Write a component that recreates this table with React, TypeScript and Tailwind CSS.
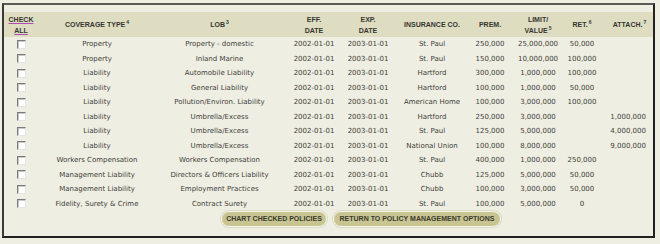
import React from "react";

type Row = {
  cov: string;
  lob: string;
  ins: string;
  prem: string;
  limit: string;
  ret: string;
  attach: string;
};

const rows: Row[] = [
  { cov: "Property", lob: "Property - domestic", ins: "St. Paul", prem: "250,000", limit: "25,000,000", ret: "50,000", attach: "" },
  { cov: "Property", lob: "Inland Marine", ins: "St. Paul", prem: "150,000", limit: "10,000,000", ret: "100,000", attach: "" },
  { cov: "Liability", lob: "Automobile Liability", ins: "Hartford", prem: "300,000", limit: "1,000,000", ret: "100,000", attach: "" },
  { cov: "Liability", lob: "General Liability", ins: "Hartford", prem: "100,000", limit: "1,000,000", ret: "50,000", attach: "" },
  { cov: "Liability", lob: "Pollution/Environ. Liability", ins: "American Home", prem: "100,000", limit: "3,000,000", ret: "100,000", attach: "" },
  { cov: "Liability", lob: "Umbrella/Excess", ins: "Hartford", prem: "250,000", limit: "3,000,000", ret: "", attach: "1,000,000" },
  { cov: "Liability", lob: "Umbrella/Excess", ins: "St. Paul", prem: "125,000", limit: "5,000,000", ret: "", attach: "4,000,000" },
  { cov: "Liability", lob: "Umbrella/Excess", ins: "National Union", prem: "100,000", limit: "8,000,000", ret: "", attach: "9,000,000" },
  { cov: "Workers Compensation", lob: "Workers Compensation", ins: "St. Paul", prem: "400,000", limit: "1,000,000", ret: "250,000", attach: "" },
  { cov: "Management Liability", lob: "Directors & Officers Liability", ins: "Chubb", prem: "125,000", limit: "5,000,000", ret: "50,000", attach: "" },
  { cov: "Management Liability", lob: "Employment Practices", ins: "Chubb", prem: "100,000", limit: "3,000,000", ret: "50,000", attach: "" },
  { cov: "Fidelity, Surety & Crime", lob: "Contract Surety", ins: "St. Paul", prem: "100,000", limit: "5,000,000", ret: "0", attach: "" },
];

const grid =
  "grid grid-cols-[34px_118px_127px_62px_46px_82px_34px_62px_26px_57px]";

function Sup({ n }: { n: string }) {
  return <span className="relative -top-[3px] text-[5px] leading-none ml-[1px]">{n}</span>;
}

function H({ children, className = "" }: { children: React.ReactNode; className?: string }) {
  return (
    <div className={"flex flex-col items-center justify-center whitespace-nowrap " + className}>
      {children}
    </div>
  );
}

function C({ children, className = "" }: { children?: React.ReactNode; className?: string }) {
  return (
    <div className={"flex items-center justify-center whitespace-nowrap " + className}>{children}</div>
  );
}

function Check() {
  return (
    <span className="block w-[9px] h-[9px] bg-white border-t border-l border-t-[#7b7b7b] border-l-[#7b7b7b] border-b border-r border-b-[#e4e4e4] border-r-[#e4e4e4] shadow-[inset_1px_1px_0_#c8c8c8]" />
  );
}

export default function App() {
  return (
    <div className="w-[660px] h-[244px] bg-[#efeee2] pt-[3px] pl-[2px]">
      <div
        className="w-[653px] h-[235px] border-2 border-t-[#5a5a54] border-l-[#3a3a36] border-r-[#222220] border-b-[#222220] bg-[#efeee2] pt-[7px] text-[#3e3e3a]"
        style={{ fontFamily: '"DejaVu Sans", Verdana, sans-serif' }}
      >
        <div
          className={grid + " h-[25px] bg-[#dedcc1] text-[7px] font-bold leading-[11px] text-[#363632]"}
          style={{ fontFamily: '"Liberation Sans", Arial, sans-serif' }}
        >
          <H>
            <span className="underline decoration-[#b04cb4] underline-offset-[1px]">CHECK</span>
            <span className="underline decoration-[#b04cb4] underline-offset-[1px]">ALL</span>
          </H>
          <H>
            <span>
              COVERAGE TYPE<Sup n="4" />
            </span>
          </H>
          <H>
            <span>
              LOB<Sup n="3" />
            </span>
          </H>
          <H>
            <span>EFF.</span>
            <span>DATE</span>
          </H>
          <H>
            <span>EXP.</span>
            <span>DATE</span>
          </H>
          <H>
            <span>INSURANCE CO.</span>
          </H>
          <H>
            <span>PREM.</span>
          </H>
          <H>
            <span>LIMIT/</span>
            <span>
              VALUE<Sup n="5" />
            </span>
          </H>
          <H>
            <span>
              RET.<Sup n="6" />
            </span>
          </H>
          <H className="pl-[12px]">
            <span>
              ATTACH.<Sup n="7" />
            </span>
          </H>
        </div>
        {rows.map((r, i) => (
          <div key={i} className={grid + " h-[14.5px] text-[7px]"}>
            <C>
              <Check />
            </C>
            <C>{r.cov}</C>
            <C>{r.lob}</C>
            <C>2002-01-01</C>
            <C>2003-01-01</C>
            <C>{r.ins}</C>
            <C>{r.prem}</C>
            <C>{r.limit}</C>
            <C>{r.ret}</C>
            <div className="flex items-center justify-end pr-[6px] whitespace-nowrap">{r.attach}</div>
          </div>
        ))}
        <div
          className="flex gap-[6px] pl-[217px] text-[7px] font-bold text-[#3a3a2c]"
          style={{ fontFamily: '"Liberation Sans", Arial, sans-serif' }}
        >
          <button className="h-[16px] w-[106px] rounded-full bg-[#c8c593] border-[1.5px] border-[#f7f6e8] shadow-[0_0_0_1px_#dcdac4] flex items-center justify-center whitespace-nowrap">
            CHART CHECKED POLICIES
          </button>
          <button className="h-[16px] w-[168px] rounded-full bg-[#c8c593] border-[1.5px] border-[#f7f6e8] shadow-[0_0_0_1px_#dcdac4] flex items-center justify-center whitespace-nowrap">
            RETURN TO POLICY MANAGEMENT OPTIONS
          </button>
        </div>
      </div>
    </div>
  );
}
